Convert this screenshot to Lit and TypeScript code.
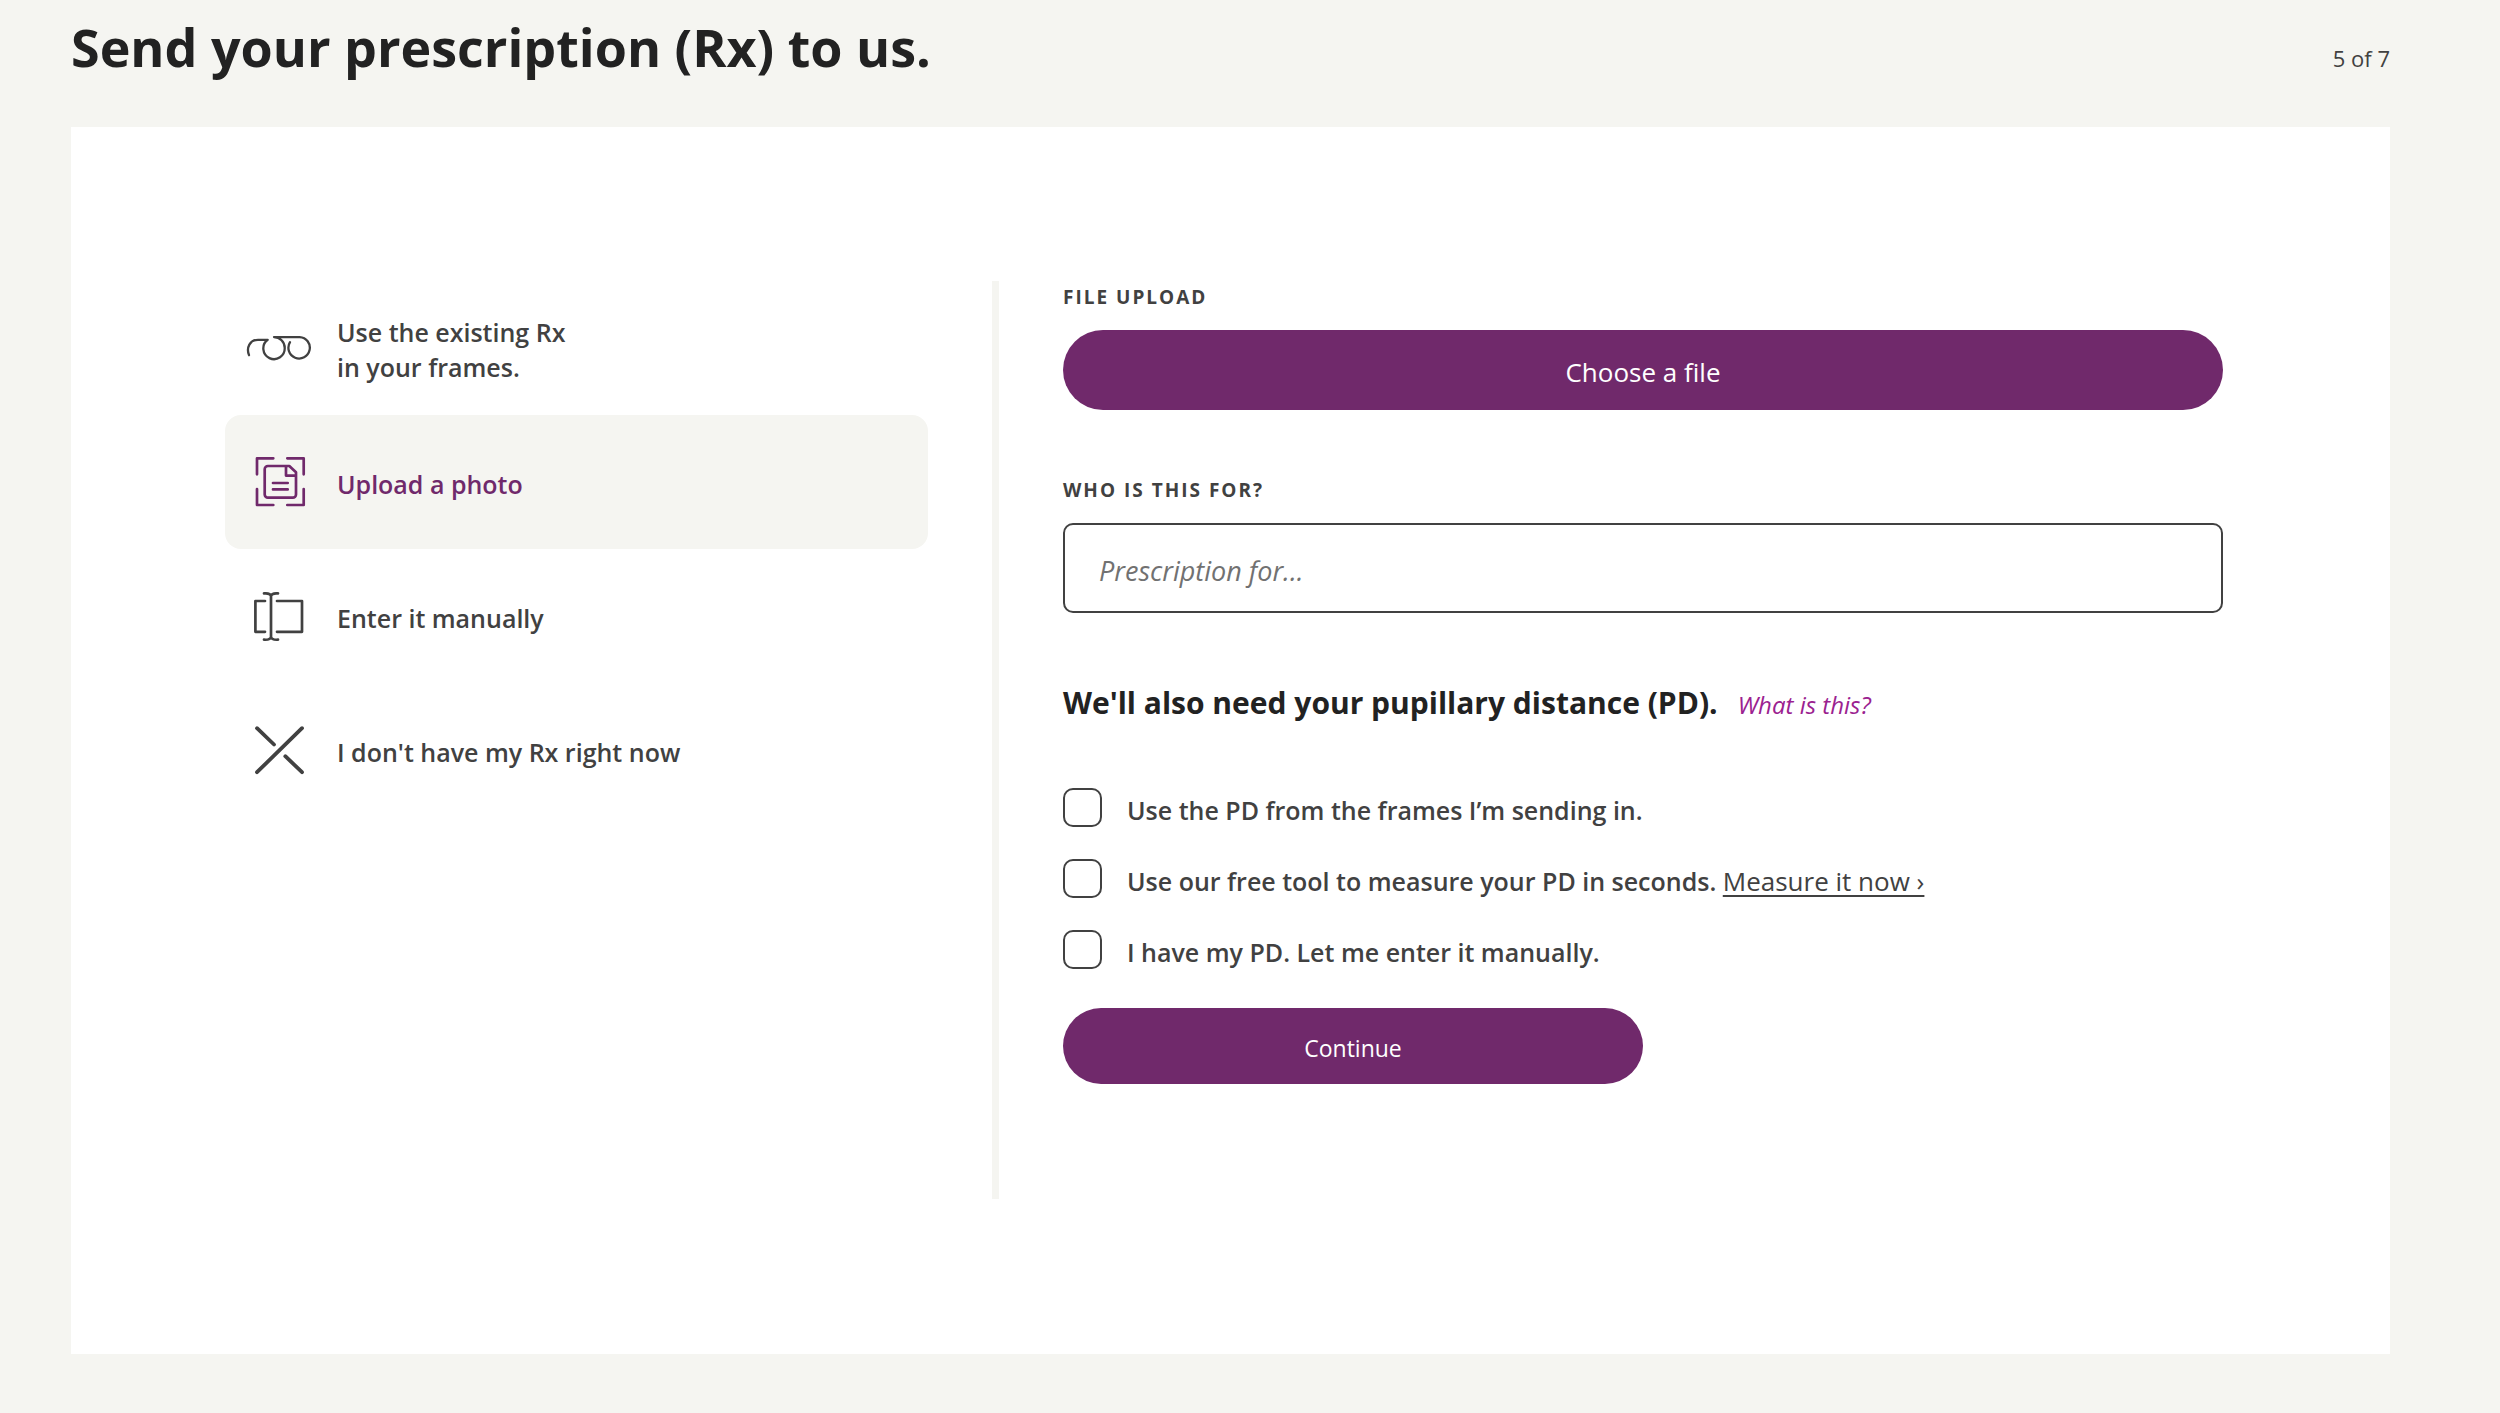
import { LitElement, html, svg, css } from "lit";
import { customElement, state } from "lit/decorators.js";
import { classMap } from "lit/directives/class-map.js";

const options = [
  {
    label: html`Use the existing Rx<br />in your frames.`,
    icon: svg`<path stroke-width="2.3" d="M10 47.2C7 39.500 11 31.800 19 31.800H28.700A10.700 10.700 0 1 0 45.700 39.800A10.700 10.700 0 0 0 35 29.100H60.700A10.700 10.700 0 1 1 51 34.200"/>`,
  },
  {
    label: html`Upload a photo`,
    icon: svg`<path stroke-width="2.7" d="M18 32.3V16.3H34.3M48.3 16.3H64.7V32.3M64.7 47V63H48.3M34.3 63H18V47M29 24H50.3L57 30.3V52.5A3.2 3.2 0 0 1 53.8 55.7H29A3.2 3.2 0 0 1 25.7 52.5V27.2A3.2 3.2 0 0 1 29 24ZM47 24V33.6H57M34 41H48.7M34 47.4H48.7"/>`,
  },
  {
    label: html`Enter it manually`,
    icon: svg`<path stroke-width="2.7" d="M26 25H16.4V55.8H26M38 25H63V55.8H38M32 19.4V61.6M25 17.4C29 17 31.5 18 32 20C32.5 18 35 17 39 17.4M25 63.7C29 64 31.5 63 32 61C32.5 63 35 64 39 63.7"/>`,
  },
  {
    label: html`I don't have my Rx right now`,
    icon: svg`<path stroke-width="3.8" d="M18 18.2L35 34.5M46.3 46.2L63 62.2M63 18.2L18 62.2"/>`,
  },
];

@customElement("app-root")
export class AppRoot extends LitElement {
  static styles = css`
    :host {
      display: block;
      font-family: "Open Sans", "Noto Sans", sans-serif;
      font-size: 25px;
      color: #414141;
    }
    * {
      box-sizing: border-box;
    }
    button,
    input {
      font: inherit;
      color: inherit;
      margin: 0;
    }
    .page {
      min-height: 100vh;
      display: flex;
      flex-direction: column;
      background: #f5f5f1;
      padding: 15px 110px 59px 71px;
    }
    .top {
      display: flex;
      justify-content: space-between;
      align-items: baseline;
      padding-bottom: 48px;
    }
    .title {
      margin: 0;
      font-size: 52px;
      line-height: 64px;
      font-weight: 700;
      color: #222;
    }
    .step {
      font-size: 22px;
    }
    .card {
      flex: 1;
      display: grid;
      grid-template-columns: 703fr 7px 1160fr;
      column-gap: 64px;
      background: #fff;
      padding: 154px 167px 155px 154px;
    }
    .option {
      width: 100%;
      min-height: 134px;
      display: flex;
      align-items: center;
      gap: 18px;
      padding: 0 14px;
      border: 0;
      border-radius: 16px;
      background: none;
      text-align: left;
      font-weight: 600;
      line-height: 35px;
      cursor: pointer;
    }
    .option.selected {
      background: #f5f5f1;
      color: #70296b;
    }
    .icon {
      flex: none;
      width: 80px;
      height: 80px;
      fill: none;
      stroke: currentColor;
      stroke-linecap: round;
      stroke-linejoin: round;
    }
    .option-text,
    .check-text {
      padding-top: 4px;
    }
    .divider {
      background: #f5f5f1;
    }
    .form {
      display: flex;
      flex-direction: column;
      padding-top: 1px;
    }
    .field {
      display: flex;
      flex-direction: column;
      gap: 18px;
      margin-bottom: 65px;
    }
    .label {
      font-size: 19px;
      line-height: 30px;
      font-weight: 700;
      letter-spacing: 2px;
      text-transform: uppercase;
    }
    .pill {
      padding: 4px 24px 0;
      border: 0;
      border-radius: 40px;
      background: #70296b;
      color: #fff;
      cursor: pointer;
    }
    .choose {
      height: 80px;
      font-size: 26px;
    }
    .text {
      width: 100%;
      height: 90px;
      padding: 4px 34px 0;
      border: 2px solid #414141;
      border-radius: 10px;
      background: #fff;
      font-size: 27px;
    }
    .text::placeholder {
      color: #717171;
      opacity: 1;
      font-style: italic;
    }
    .heading {
      display: flex;
      align-items: baseline;
      gap: 20px;
      padding-top: 1px;
      margin-bottom: 61px;
    }
    .question {
      margin: 0;
      font-size: 30px;
      line-height: 48px;
      font-weight: 700;
      color: #222;
    }
    .help {
      font-size: 24px;
      font-style: italic;
      color: #9b2290;
      text-decoration: none;
    }
    .checks {
      display: flex;
      flex-direction: column;
      gap: 32px;
      margin-bottom: 39px;
    }
    .check {
      display: flex;
      align-items: center;
      height: 39px;
    }
    .box {
      appearance: none;
      flex: none;
      width: 39px;
      height: 39px;
      margin-right: 25px;
      border: 2px solid #414141;
      border-radius: 10px;
      background: #fff;
    }
    .box:checked {
      background: #70296b;
    }
    .check-text {
      font-weight: 600;
    }
    .measure {
      font-size: 26px;
      font-weight: 400;
      color: inherit;
      text-decoration-thickness: 2px;
      text-underline-offset: 4px;
    }
    .continue {
      width: 50%;
      height: 76px;
      font-size: 23px;
    }
  `;

  @state() private selected = 1;

  render() {
    return html`
      <main class="page">
        <header class="top">
          <h1 class="title">Send your prescription (Rx) to us.</h1>
          <span class="step">5 of 7</span>
        </header>
        <section class="card">
          <nav aria-label="Prescription method">
            ${options.map(
              (o, i) => html`<button
                type="button"
                class=${classMap({ option: true, selected: i === this.selected })}
                aria-pressed=${i === this.selected}
                @click=${() => (this.selected = i)}
              >
                <svg class="icon" viewBox="0 0 80 80" aria-hidden="true">${o.icon}</svg>
                <span class="option-text">${o.label}</span>
              </button>`
            )}
          </nav>
          <div class="divider"></div>
          <form class="form" @submit=${(e: Event) => e.preventDefault()}>
            <div class="field">
              <label class="label" for="file">File upload</label>
              <button type="button" id="file" class="pill choose">Choose a file</button>
            </div>
            <div class="field">
              <label class="label" for="who">Who is this for?</label>
              <input id="who" class="text" type="text" placeholder="Prescription for..." />
            </div>
            <div class="heading">
              <h2 class="question">We'll also need your pupillary distance (PD).</h2>
              <a class="help" href="#pd">What is this?</a>
            </div>
            <div class="checks">
              <div class="check">
                <input id="pd-frames" class="box" type="checkbox" />
                <label class="check-text" for="pd-frames">Use the PD from the frames I’m sending in.</label>
              </div>
              <div class="check">
                <input id="pd-tool" class="box" type="checkbox" />
                <span class="check-text"
                  ><label for="pd-tool">Use our free tool to measure your PD in seconds.</label>
                  <a class="measure" href="#measure">Measure it now ›</a></span
                >
              </div>
              <div class="check">
                <input id="pd-manual" class="box" type="checkbox" />
                <label class="check-text" for="pd-manual">I have my PD. Let me enter it manually.</label>
              </div>
            </div>
            <button type="submit" class="pill continue">Continue</button>
          </form>
        </section>
      </main>
    `;
  }
}
